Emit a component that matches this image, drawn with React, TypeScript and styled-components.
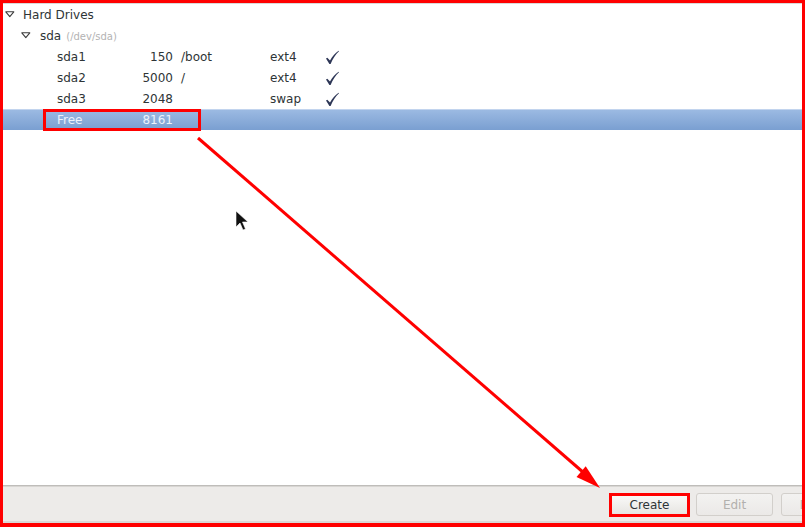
import React from "react";
import styled, { createGlobalStyle } from "styled-components";

const GlobalStyle = createGlobalStyle`
  html, body { margin: 0; padding: 0; background: #ffffff; overflow: hidden; }
  * { box-sizing: border-box; }
`;

const Page = styled.div`
  position: relative;
  width: 805px;
  height: 527px;
  font-family: "DejaVu Sans", "Liberation Sans", sans-serif;
  font-size: 12px;
  color: #2e3436;
`;

const Frame = styled.div`
  width: 805px;
  height: 527px;
  border-style: solid;
  border-color: #ff0000;
  border-width: 3px 3px 4px 3px;
  display: flex;
  flex-direction: column;
  overflow: hidden;
`;

const Tree = styled.div`
  flex: 1;
  background: #ffffff;
  border-top: 1px solid #d9d9d9;
  display: flex;
  flex-direction: column;
`;

const NodeRow = styled.div<{ $depth: number }>`
  display: flex;
  align-items: center;
  height: 21px;
  padding-top: 2px;
  line-height: 19px;
  padding-left: ${(p) => (p.$depth === 0 ? 2 : 18)}px;
  white-space: nowrap;
`;

const Expander = styled.span<{ $depth: number }>`
  width: ${(p) => (p.$depth === 0 ? 18 : 19)}px;
  height: 19px;
  display: flex;
  align-items: center;
  padding-bottom: 3px;
`;

const DevPath = styled.span`
  margin-left: 5px;
  font-size: 10px;
  color: #b3b3b3;
`;

const PartRow = styled.div<{ $selected?: boolean }>`
  position: relative;
  display: grid;
  grid-template-columns: 60px 56px 97px 55px 16px;
  align-items: center;
  height: 21px;
  padding-top: 2px;
  line-height: 19px;
  padding-left: 54px;
  white-space: nowrap;
  color: ${(p) => (p.$selected ? "#eef3fb" : "#2e3436")};
  background: ${(p) =>
    p.$selected ? "linear-gradient(#9dbbe3, #7a9fd1)" : "transparent"};
  box-shadow: ${(p) => (p.$selected ? "inset 0 1px 0 #c2d4ee" : "none")};
`;

const SizeCell = styled.span`
  text-align: right;
`;

const MountCell = styled.span`
  padding-left: 8px;
`;

const CheckCell = styled.span`
  display: flex;
  align-items: center;
  height: 19px;
`;

const RowMark = styled.div`
  position: absolute;
  left: 40px;
  top: 0;
  width: 158px;
  height: 22px;
  border: 3px solid #ff0000;
  pointer-events: none;
`;

const Separator = styled.div`
  height: 2px;
  border-top: 1px solid #bfbdba;
  border-bottom: 1px solid #d8d6d3;
`;

const Toolbar = styled.div`
  height: 36px;
  background: #edebe9;
  border-bottom: 2px solid #dad8d5;
  display: flex;
  align-items: center;
  gap: 8px;
  padding: 1px 0 0 608px;
  overflow: hidden;
`;

const ButtonSlot = styled.div`
  position: relative;
  flex-shrink: 0;
`;

const Button = styled.button<{ $disabled?: boolean }>`
  width: 77px;
  height: 23px;
  flex-shrink: 0;
  border-radius: 3px;
  font-family: "DejaVu Sans", "Liberation Sans", sans-serif;
  font-size: 12px;
  padding: 0;
  border: 1px solid ${(p) => (p.$disabled ? "#d2cfcb" : "#b4b1ac")};
  color: ${(p) => (p.$disabled ? "#b2b0ad" : "#2e3436")};
  background: ${(p) =>
    p.$disabled
      ? "linear-gradient(#f3f2f1, #ebe9e7)"
      : "linear-gradient(#fbfbfa, #e6e4e1)"};
`;

const ButtonMark = styled.div`
  position: absolute;
  left: -2px;
  right: -2px;
  top: 0;
  bottom: -1px;
  border: 3px solid #ff0000;
  pointer-events: none;
`;

const Overlay = styled.svg`
  position: absolute;
  left: 0;
  top: 0;
  width: 805px;
  height: 527px;
  pointer-events: none;
`;

const Triangle = () => (
  <svg width="10" height="7" viewBox="0 0 10 7">
    <polygon
      points="0.8,0.8 8.8,0.8 4.8,5.6"
      fill="none"
      stroke="#3c3c3c"
      strokeWidth="1.1"
      strokeLinejoin="round"
    />
  </svg>
);

const Check = () => (
  <svg width="15" height="15" viewBox="0 0 15 15">
    <path
      d="M1 8.6 L2.3 7.7 L5 10.6 C7.4 6.4 10 3.2 13.6 0.8 L14 1.3 C10.6 4.4 8 8.4 5.6 14 L4.4 14 Z"
      fill="#2d3656"
    />
  </svg>
);

type Part = { name: string; size: string; mount: string; fs: string; fmt: boolean };

const parts: Part[] = [
  { name: "sda1", size: "150", mount: "/boot", fs: "ext4", fmt: true },
  { name: "sda2", size: "5000", mount: "/", fs: "ext4", fmt: true },
  { name: "sda3", size: "2048", mount: "", fs: "swap", fmt: true },
];

export default function App() {
  return (
    <Page>
      <GlobalStyle />
      <Frame>
        <Tree>
          <NodeRow $depth={0}>
            <Expander $depth={0}>
              <Triangle />
            </Expander>
            Hard Drives
          </NodeRow>
          <NodeRow $depth={1}>
            <Expander $depth={1}>
              <Triangle />
            </Expander>
            sda
            <DevPath>(/dev/sda)</DevPath>
          </NodeRow>
          {parts.map((p) => (
            <PartRow key={p.name}>
              <span>{p.name}</span>
              <SizeCell>{p.size}</SizeCell>
              <MountCell>{p.mount}</MountCell>
              <span>{p.fs}</span>
              <CheckCell>{p.fmt && <Check />}</CheckCell>
            </PartRow>
          ))}
          <PartRow $selected>
            <span>Free</span>
            <SizeCell>8161</SizeCell>
            <MountCell />
            <span />
            <CheckCell />
            <RowMark />
          </PartRow>
        </Tree>
        <Separator />
        <Toolbar>
          <ButtonSlot>
            <Button>Create</Button>
            <ButtonMark />
          </ButtonSlot>
          <Button $disabled>Edit</Button>
          <Button $disabled>Delete</Button>
          <Button $disabled>Reset</Button>
        </Toolbar>
      </Frame>
      <Overlay viewBox="0 0 805 527">
        <line x1="198" y1="138" x2="584" y2="473" stroke="#ff0000" strokeWidth="3" />
        <polygon points="600,488 576.5,476.9 585.7,466.3" fill="#ff0000" />
        <path
          d="M236 211 L236 227 L240 223 L243 230 L245.5 229 L242.5 222 L248 222 Z"
          fill="#111"
          stroke="#ffffff"
          strokeWidth="0.6"
        />
      </Overlay>
    </Page>
  );
}
